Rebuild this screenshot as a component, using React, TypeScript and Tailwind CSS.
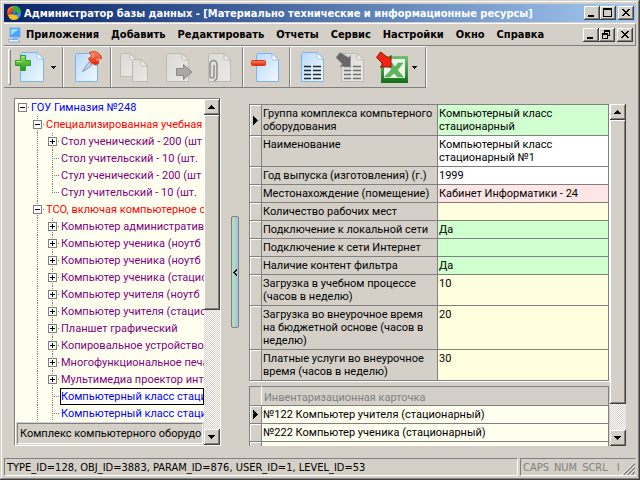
import type { ReactNode } from "react"
import clsx from "clsx"

type TreeRow = { level: number; text: string; color: string; box?: "+" | "-"; last?: boolean; selected?: boolean }

const RED = "text-[#ff0000]"
const BLUE = "text-[#0000ff]"
const PURPLE = "text-[#800080]"

const tree: TreeRow[] = [
  { level: 0, text: "ГОУ Гимназия №248", color: BLUE, box: "-" },
  { level: 1, text: "Специализированная учебная", color: RED, box: "-" },
  { level: 2, text: "Стол ученический - 200 (шт", color: PURPLE, box: "+" },
  { level: 2, text: "Стол учительский - 10 (шт.", color: PURPLE },
  { level: 2, text: "Стул ученический - 200 (шт", color: PURPLE },
  { level: 2, text: "Стул учительский - 10 (шт.", color: PURPLE, last: true },
  { level: 1, text: "ТСО, включая компьютерное о", color: RED, box: "-" },
  { level: 2, text: "Компьютер административн", color: PURPLE, box: "+" },
  { level: 2, text: "Компьютер ученика (ноутб", color: PURPLE, box: "+" },
  { level: 2, text: "Компьютер ученика (ноутб", color: PURPLE, box: "+" },
  { level: 2, text: "Компьютер ученика (стацио", color: PURPLE, box: "+" },
  { level: 2, text: "Компьютер учителя (ноутб", color: PURPLE, box: "+" },
  { level: 2, text: "Компьютер учителя (стацио", color: PURPLE, box: "+" },
  { level: 2, text: "Планшет графический", color: PURPLE, box: "+" },
  { level: 2, text: "Копировальное устройство", color: PURPLE, box: "+" },
  { level: 2, text: "Многофункциональное печа", color: PURPLE, box: "+" },
  { level: 2, text: "Мультимедиа проектор инт", color: PURPLE, box: "+" },
  { level: 2, text: "Компьютерный класс стаци", color: BLUE, selected: true },
  { level: 2, text: "Компьютерный класс стаци", color: BLUE },
]

const params = [
  { label: "Группа комплекса компьтерного\nоборудования", value: "Компьютерный класс\nстационарный", h: "h-[31px]", bg: "bg-[#d0ffd0]" },
  { label: "Наименование", value: "Компьютерный класс\nстационарный №1", h: "h-[31px]", bg: "bg-white" },
  { label: "Год выпуска (изготовления) (г.)", value: "1999", h: "h-[18px]", bg: "bg-white" },
  { label: "Местонахождение (помещение)", value: "Кабинет Информатики - 24", h: "h-[18px]", bg: "bg-[#ffe6e6]" },
  { label: "Количество рабочих мест", value: "", h: "h-[18px]", bg: "bg-[#ffffe0]" },
  { label: "Подключение к локальной сети", value: "Да", h: "h-[18px]", bg: "bg-[#d0ffd0]" },
  { label: "Подключение к сети Интернет", value: "", h: "h-[18px]", bg: "bg-[#d0ffd0]" },
  { label: "Наличие контент фильтра", value: "Да", h: "h-[18px]", bg: "bg-[#d0ffd0]" },
  { label: "Загрузка в учебном процессе\n(часов в неделю)", value: "10", h: "h-[31px]", bg: "bg-[#ffffe0]" },
  { label: "Загрузка во внеурочное время\nна бюджетной основе (часов в\nнеделю)", value: "20", h: "h-[44px]", bg: "bg-[#ffffe0]" },
  { label: "Платные услуги во внеурочное\nвремя (часов в неделю)", value: "30", h: "h-[31px]", bg: "bg-[#ffffe0]" },
]

const cards = ["№122 Компьютер учителя (стационарный)", "№222 Компьютер ученика (стационарный)", ""]

const menu = ["Приложения", "Добавить", "Редактировать", "Отчеты", "Сервис", "Настройки", "Окно", "Справка"]

const RAISED = "bg-[#d4d0c8] shadow-[inset_-1px_-1px_#404040,inset_1px_1px_#fff,inset_-2px_-2px_#808080]"
const DITHER = "bg-[conic-gradient(#fff_25%,#d4d0c8_0_50%,#fff_0_75%,#d4d0c8_0)] bg-[length:2px_2px]"

function CaptionButton({ label, children }: { label: string; children: ReactNode }) {
  return (
    <button aria-label={label} className={clsx("h-[14px] w-4 shrink-0", RAISED)}>
      <svg width="16" height="14" viewBox="0 0 16 14" shapeRendering="crispEdges">{children}</svg>
    </button>
  )
}

function CaptionButtons({ restore }: { restore?: boolean }) {
  return (
    <div className="ml-auto flex pr-0.5">
      <CaptionButton label="Свернуть">
        <path d="M4 9h6v2h-6z" />
      </CaptionButton>
      <CaptionButton label={restore ? "Восстановить" : "Развернуть"}>
        {restore ? (
          <path d="M5 2h6v2h-6zM5 4h1v2h-1zM10 4h1v4h-1zM9 7h1v1h-1zM3 5h6v2h-6zM3 7h1v4h-1zM8 7h1v4h-1zM3 10h6v1h-6z" />
        ) : (
          <path d="M3 2h9v2h-9zM3 4h1v7h-1zM11 4h1v7h-1zM3 10h9v1h-9z" />
        )}
      </CaptionButton>
      <span className="w-0.5" />
      <CaptionButton label="Закрыть">
        <path d="M4 3h2v1h1v1h2v-1h1v-1h2v1h-1v1h-1v1h-1v1h1v1h1v1h1v1h-2v-1h-1v-1h-2v1h-1v1h-2v-1h1v-1h1v-1h1v-1h-1v-1h-1v-1h-1z" />
      </CaptionButton>
    </div>
  )
}

function ScrollButton({ down }: { down?: boolean }) {
  return (
    <button aria-label={down ? "Вниз" : "Вверх"} className={clsx("h-4 w-full shrink-0", RAISED)}>
      <svg width="16" height="16" viewBox="0 0 16 16" shapeRendering="crispEdges">
        {down ? <path d="M4 6h7v1h-1v1h-1v1h-1v1h-1v-1h-1v-1h-1v-1h-1z" /> : <path d="M7 6h1v1h1v1h1v1h1v1h-7v-1h1v-1h1v-1h1z" />}
      </svg>
    </button>
  )
}

function Guide({ level, row }: { level: number; row: TreeRow }) {
  const own = level === row.level
  return (
    <svg width="15" height="17" viewBox="0 0 15 17" className="shrink-0" shapeRendering="crispEdges">
      <g stroke="#808080" strokeDasharray="1 1">
        {level > 0 && <path d={own && row.last ? "M7.5 0V9" : "M7.5 0V17"} />}
        {own && <path d="M7 8.5H15" />}
      </g>
      {own && row.box && (
        <>
          <rect x="3.5" y="4.5" width="8" height="8" fill="#fff" stroke="#808080" />
          <path d={row.box === "+" ? "M5 8.5h5M7.5 6v5" : "M5 8.5h5"} stroke="#000" />
        </>
      )}
    </svg>
  )
}

function Marker() {
  return (
    <svg width="5" height="9" viewBox="0 0 5 9" className="mx-auto" shapeRendering="crispEdges">
      <path d="M0 0h1v1h1v1h1v1h1v1h1v1h-1v1h-1v1h-1v1h-1v1h-1z" />
    </svg>
  )
}

function Sheet({ x = 6, y = 2, w = 23, h = 29, gray }: { x?: number; y?: number; w?: number; h?: number; gray?: boolean }) {
  return (
    <g transform={`translate(${x} ${y})`}>
      <path
        d={`M1.5 .5H${w - 7}L${w - 0.5} 7V${h - 0.5}H.5V1.5Z`}
        fill={gray ? "url(#sheetGray)" : "url(#sheetBlue)"}
        stroke={gray ? "#bcbab5" : "#7cb4ea"}
      />
      <path d={`M${w - 7} .5V5.5Q${w - 7} 7 ${w - 5.5} 7H${w - 0.5}Z`} fill={gray ? "#efeeec" : "#fff"} stroke={gray ? "#bcbab5" : "#8fc0ee"} />
    </g>
  )
}

function Lines({ x, y, color }: { x: number; y: number; color: string }) {
  return (
    <path
      transform={`translate(${x} ${y})`}
      d="M0 .5h7M9 .5h8M0 4.500h7M9 4.500h8M0 8.500h7M9 8.500h8M0 12.500h7M9 12.500h8"
      stroke={color}
      strokeWidth="1.500"
    />
  )
}

function Tool({ label, children, className }: { label: string; children: ReactNode; className?: string }) {
  return (
    <button aria-label={label} className={clsx("shrink-0", className)}>
      <svg width="32" height="32" viewBox="0 0 32 32">{children}</svg>
    </button>
  )
}

function DropArrow() {
  return (
    <button aria-label="Ещё" className="shrink-0">
      <svg width="5" height="3" viewBox="0 0 5 3" shapeRendering="crispEdges">
        <path d="M0 0h5v1h-1v1h-1v1h-1v-1h-1v-1h-1z" />
      </svg>
    </button>
  )
}

function Toolbar() {
  const band = "flex items-center border-r border-[#808080] shadow-[1px_0_#fff]"
  return (
    <div className="flex h-[42px] w-fit border-t border-b border-t-white border-b-[#808080]">
      <svg width="0" height="0" className="absolute">
        <defs>
          <linearGradient id="sheetBlue" x1="0" y1="0" x2="1" y2="1">
            <stop offset="0" stopColor="#b8dafc" />
            <stop offset="1" stopColor="#f2f9ff" />
          </linearGradient>
          <linearGradient id="sheetGray" x1="0" y1="0" x2="1" y2="1">
            <stop offset="0" stopColor="#dad9d6" />
            <stop offset="1" stopColor="#ebeae8" />
          </linearGradient>
          <linearGradient id="green" x1="0" y1="0" x2="0" y2="1">
            <stop offset="0" stopColor="#8fe05a" />
            <stop offset="1" stopColor="#1c9a1c" />
          </linearGradient>
          <linearGradient id="red" x1="0" y1="0" x2="0" y2="1">
            <stop offset="0" stopColor="#ff8a66" />
            <stop offset="1" stopColor="#dc2408" />
          </linearGradient>
          <linearGradient id="excel" x1="0" y1="0" x2="0" y2="1">
            <stop offset="0" stopColor="#6fc06f" />
            <stop offset="1" stopColor="#14701c" />
          </linearGradient>
        </defs>
      </svg>

      <div className={clsx(band, "w-[59px] gap-1 pl-1")}>
        <span className="h-9 w-[3px] border border-white border-r-[#808080] border-b-[#808080]" />
        <Tool label="Добавить">
          <Sheet x={5} y={1} w={24} h={30} />
          <path d="M5.500 4.500h5v5h5v5h-5v5h-5v-5h-5v-5h5z" fill="url(#green)" stroke="#2f9e22" strokeLinejoin="round" />
          <path d="M6.500 6h3M1.500 10.500h5" stroke="#b9f08e" />
        </Tool>
        <DropArrow />
      </div>

      <div className={clsx(band, "w-12 justify-center")}>
        <Tool label="Закрепить">
          <Sheet x={4} y={2} />
          <path d="M18 11l3 3-6 4.500-3.500 2 2-3.500z" fill="#c4d2e4" stroke="#76869c" strokeWidth=".8" />
          <path d="M18.500 1.500q4-2 8 0 4.500 3 4 6l-3.500 1 .5 4-2.500 1.500q-6-1.500-7.500-6.500l2-1.500 2 .2z" fill="url(#red)" stroke="#d83c20" />
          <path d="M20 2.500q3 .5 2 4.500M25 9l4-1.500" fill="none" stroke="#ffb49c" />
        </Tool>
      </div>

      <div className={clsx(band, "w-[132px] gap-[13px] pl-[7px]")}>
        <Tool label="Копировать">
          <Sheet x={2} y={2} w={17} h={24} gray />
          <Sheet x={14} y={8} w={16} h={23} gray />
        </Tool>
        <Tool label="Переместить">
          <Sheet x={3} y={2} gray />
          <path d="M13.500 17.500h7v-4l8.500 7.500-8.500 7.500v-4h-7z" fill="#a9a8a6" stroke="#8b8a88" strokeLinejoin="round" />
        </Tool>
        <Tool label="Прикрепить">
          <Sheet x={0} y={2} gray />
          <path d="M6 14v11a2 2 0 0 1-4 0v-12a3.500 3.500 0 0 1 7 0v13a3.500 3.500 0 0 1-3 3.500" fill="none" stroke="#8e8d8b" strokeWidth="1.500" />
        </Tool>
      </div>

      <div className={clsx(band, "w-[47px] pl-[7px]")}>
        <Tool label="Удалить">
          <Sheet x={6} y={2} />
          <rect x="1.500" y="9.500" width="14" height="5" rx="1" fill="url(#red)" stroke="#d83418" />
        </Tool>
      </div>

      <div className={clsx(band, "w-[136px] pl-[6px]")}>
        <Tool label="Список">
          <Sheet x={5} y={1} h={30} />
          <Lines x={8} y={15} color="#202830" />
        </Tool>
        <Tool label="Импорт списка" className="ml-2">
          <Sheet x={5} y={2} gray />
          <Lines x={8} y={15} color="#70706e" />
          <path d="M4 1.500l8.500 5 2-2v11h-10.500l2.500-2.500-6.500-6.500z" fill="#666" stroke="#8d8c8a" strokeWidth=".5" />
        </Tool>
        <Tool label="Экспорт в Excel" className="ml-2">
          <rect x="5" y="5" width="27" height="27" fill="url(#excel)" />
          <rect x="8" y="8" width="21" height="19" fill="#e9f5e6" />
          <path d="M10 12h6l3 4 3-4h5l-5.500 7 6 7h-6l-3.500-4-4 4h-5.500l7-7.500z" fill="#5eb45f" stroke="#4aa04d" strokeWidth=".5" />
          <path d="M4.500 1l8 6 2.500-2.500v11.500h-11l3-3-6.500-6.500z" fill="#f42414" stroke="#8c1208" />
        </Tool>
        <span className="w-1" />
        <DropArrow />
      </div>
    </div>
  )
}

function TreePanel() {
  return (
    <div className="flex w-[207px] shrink-0 border border-[#808080] border-r-white border-b-white bg-[#fffff0]">
      <div className="flex min-w-0 flex-1 flex-col">
        <ul className="min-h-0 flex-1 overflow-hidden">
          {tree.map((row, i) => (
            <li key={i} className="flex h-[17px]">
              {Array.from({ length: row.level + 1 }, (_, level) => (
                <Guide key={level} level={level} row={row} />
              ))}
              <span
                className={clsx(
                  "h-[17px] min-w-0 flex-1 overflow-hidden pt-px pl-px leading-[16px] whitespace-nowrap",
                  row.color,
                  row.selected && "bg-white outline outline-black -outline-offset-1",
                )}
              >
                {row.text}
              </span>
            </li>
          ))}
        </ul>
        <div className="border-t border-l border-white bg-[#d4d0c8] p-px">
          <p className="h-[21px] overflow-hidden border border-[#808080] border-r-white border-b-white pl-0.5 leading-[19px] whitespace-nowrap">
            Комплекс компьютерного оборудов
          </p>
        </div>
      </div>
      <div className={clsx("flex w-4 flex-col", DITHER)}>
        <ScrollButton />
        <div className={clsx("flex-[194]", RAISED)} />
        <div className="flex-[118]" />
        <ScrollButton down />
      </div>
    </div>
  )
}

function ParamTable() {
  return (
    <table className="w-full table-fixed border-separate border-spacing-0 border-r border-b border-[#808080] shadow-[1px_1px_#fff]">
      <colgroup>
        <col className="w-3" />
        <col className="w-[176px]" />
        <col />
      </colgroup>
      <tbody>
        {params.map((p, i) => (
          <tr key={p.label} className={p.h}>
            <td className="border-t border-l border-[#808080] p-0 align-middle shadow-[inset_1px_1px_#fff]">{i === 0 && <Marker />}</td>
            <th scope="row" className="border-t border-l border-[#808080] p-0 pt-0.5 pl-px text-left align-top font-normal whitespace-pre">
              {p.label}
            </th>
            <td className={clsx("border-t border-l border-[#808080] p-0 pt-0.5 pl-px align-top whitespace-pre", p.bg)}>{p.value}</td>
          </tr>
        ))}
      </tbody>
    </table>
  )
}

function CardTable() {
  return (
    <table className="w-full table-fixed border-separate border-spacing-0 border-r border-[#808080]">
      <colgroup>
        <col className="w-3" />
        <col />
      </colgroup>
      <thead>
        <tr className="h-[19px]">
          <td className="border-t border-l border-[#808080] p-0" />
          <th scope="col" className="border-t border-l border-t-[#808080] border-l-white p-0 pt-1 pl-0.5 text-left align-top font-normal text-[#808080]">
            Инвентаризационная карточка
          </th>
        </tr>
      </thead>
      <tbody>
        {cards.map((c, i) => (
          <tr key={i} className="h-[18px]">
            <td className="border-t border-l border-[#808080] p-0 align-middle shadow-[inset_1px_1px_#fff]">{i === 0 && <Marker />}</td>
            <td className="border-t border-l border-[#808080] bg-[#fffff0] p-0 pt-0.5 pl-px align-top whitespace-nowrap">{c}</td>
          </tr>
        ))}
      </tbody>
    </table>
  )
}

export default function App() {
  return (
    <div className="flex h-screen flex-col overflow-hidden bg-[#d4d0c8] p-1 font-['DejaVu_Sans_Condensed','DejaVu_Sans',sans-serif] text-[11px] leading-[13px] text-black shadow-[inset_-1px_-1px_#404040,inset_1px_1px_#d4d0c8,inset_-2px_-2px_#808080,inset_2px_2px_#fff]">
      <header className="flex h-[18px] shrink-0 items-center bg-linear-to-r from-[#0a246a] to-[#a6caf0] pl-0.5">
        <svg width="16" height="16" viewBox="0 0 16 16" className="shrink-0">
          <path d="M1 8Q1 2 7 1l4 1-3 4-3 2-1 3Q1 11 1 8z" fill="#f04818" />
          <path d="M2 6Q3 2 7 2" fill="none" stroke="#ff9a60" />
          <path d="M7 1q6-1 8 5 .5 3-2 5l-3-4-3-1z" fill="#2fae3c" />
          <path d="M2 10l4-1 5 1 3 1q-2 4-6 4-5 0-6-5z" fill="#f6c21c" />
          <path d="M10 9l5-1q0 4-3 5z" fill="#3c8cf0" />
          <circle cx="8" cy="8" r="2" fill="#3c78d8" />
        </svg>
        <h1 className="pl-0.5 text-[11px] font-bold whitespace-nowrap text-white">
          Администратор базы данных - [Материально технические и информационные ресурсы]
        </h1>
        <CaptionButtons />
      </header>

      <nav className="mt-px flex h-[23px] shrink-0 items-center border border-l-0 border-white border-r-[#808080] border-b-[#808080] pl-[3px]">
        <svg width="15" height="16" viewBox="0 0 15 16" className="mr-1 shrink-0">
          <rect x="2.500" y=".5" width="11" height="10" rx="1" fill="#4aa4f8" stroke="#a8c4ec" />
          <path d="M4 2h8l-8 6z" fill="#a4dcff" />
          <path d="M6 11h4l1 2h-6z" fill="#8ca8d8" />
          <path d="M1 12.500h10l2 2.500h-11z" fill="#e4eefc" stroke="#90acd8" />
        </svg>
        <div className="flex gap-3">
          {menu.map((m) => (
            <button key={m} className="font-bold whitespace-nowrap">
              {m}
            </button>
          ))}
        </div>
        <CaptionButtons restore />
      </nav>

      <Toolbar />

      <main className="flex min-h-0 flex-1 px-[10px] pt-[10px] pb-3 font-['Roboto','DejaVu_Sans_Condensed',sans-serif]">
        <TreePanel />
        <button
          aria-label="Свернуть панель"
          className="mx-[10px] flex h-28 w-2 shrink-0 items-center self-center rounded-xs border border-[#808080] bg-linear-to-r from-[#b4dcb4] from-50% to-[#a4c8e8] to-60%"
        >
          <svg width="6" height="7" viewBox="0 0 6 7" shapeRendering="crispEdges">
            <path d="M4 0h1v2h-1v1h-1v1h1v1h1v2h-1v-1h-1v-1h-1v-1h-1v-1h1v-1h1v-1h1z" />
          </svg>
        </button>
        <div className="mt-[6px] flex min-w-0 flex-1">
          <div className="flex min-w-0 flex-1 flex-col gap-[5px] overflow-hidden pr-px">
            <ParamTable />
            <CardTable />
          </div>
          <div className={clsx("flex w-4 flex-col", DITHER)}>
            <ScrollButton />
            <div className={clsx("flex-[284]", RAISED)} />
            <div className="flex-[26]" />
            <ScrollButton down />
          </div>
        </div>
      </main>

      <footer className="flex h-[18px] shrink-0 gap-0.5 leading-[18px] whitespace-nowrap">
        <p className="flex-1 overflow-hidden border border-[#808080] border-r-white border-b-white pl-0.5">
          TYPE_ID=128, OBJ_ID=3883, PARAM_ID=876, USER_ID=1, LEVEL_ID=53
        </p>
        <div className="flex w-[116px] justify-between border border-[#808080] border-r-transparent border-b-white pl-0.5 text-[#808080]">
          <span className="flex gap-[5px]">
            <span>CAPS</span>
            <span>NUM</span>
            <span>SCRL</span>
            <span className="pl-1">I</span>
          </span>
          <svg width="13" height="13" viewBox="0 0 13 13" className="shrink-0 self-end">
            <path d="M0 13L13 0M4 13L13 4M8 13L13 8" stroke="#fff" />
            <path d="M1.500 13L13 1.500M5.500 13L13 5.500M9.500 13L13 9.500" stroke="#808080" strokeWidth="1.500" />
          </svg>
        </div>
      </footer>
    </div>
  )
}
